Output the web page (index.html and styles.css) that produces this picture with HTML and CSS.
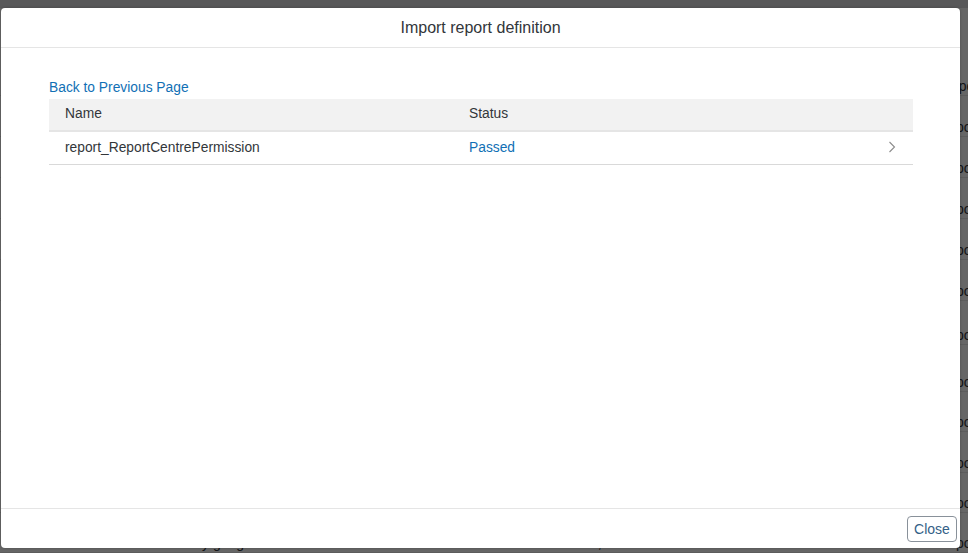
FILE: index.html
```html
<!DOCTYPE html>
<html lang="en">
<head>
<meta charset="utf-8">
<title>Import report definition</title>
<link rel="stylesheet" href="styles.css">
</head>
<body>
<div class="page">
  <div class="shell"></div>
  <div class="list">
    <div class="list-row"><span class="cell-a"></span><span class="cell-b cell-b-type">Type</span></div>
    <div class="list-row"><span class="cell-a"></span><span class="cell-b">Report</span></div>
    <div class="list-row"><span class="cell-a"></span><span class="cell-b">Report</span></div>
    <div class="list-row"><span class="cell-a"></span><span class="cell-b">Report</span></div>
    <div class="list-row"><span class="cell-a"></span><span class="cell-b">Report</span></div>
    <div class="list-row"><span class="cell-a"></span><span class="cell-b">Report</span></div>
    <div class="list-row h43"><span class="cell-a"></span><span class="cell-b">Report</span></div>
    <div class="list-row h46"><span class="cell-a"></span><span class="cell-b">Report</span></div>
    <div class="list-row h39"><span class="cell-a"></span><span class="cell-b">Report</span></div>
    <div class="list-row"><span class="cell-a"></span><span class="cell-b">Report</span></div>
    <div class="list-row h39"><span class="cell-a"></span><span class="cell-b">Report</span></div>
    <div class="list-row h39"><span class="cell-a"><span class="tail-a">Monthly gauge</span><span class="tail-b">a, b</span></span><span class="cell-b">Report</span></div>
  </div>
</div>
<div class="overlay"></div>
<div class="dialog" role="dialog">
  <header class="dlg-head">
    <h1 class="dlg-title">Import report definition</h1>
  </header>
  <section class="dlg-body">
    <a class="back-link" href="#">Back to Previous Page</a>
    <table class="tbl">
      <thead>
        <tr>
          <th class="col-name">Name</th>
          <th class="col-status">Status</th>
          <th class="col-nav"></th>
        </tr>
      </thead>
      <tbody>
        <tr>
          <td class="col-name">report_ReportCentrePermission</td>
          <td class="col-status"><span class="status-pass">Passed</span></td>
          <td class="col-nav">
            <svg class="chev" width="8" height="12" viewBox="0 0 8 12"><path d="M1.5 1 L6.5 6 L1.5 11" fill="none" stroke="#8c8c8c" stroke-width="1.1"/></svg>
          </td>
        </tr>
      </tbody>
    </table>
  </section>
  <footer class="dlg-foot">
    <button class="btn">Close</button>
  </footer>
</div>
</body>
</html>
```
FILE: styles.css
```css
html, body {
  margin: 0;
  padding: 0;
}
body {
  width: 968px;
  height: 553px;
  overflow: hidden;
  position: relative;
  font-family: "Liberation Sans", Arial, sans-serif;
  background: #ffffff;
}
.page {
  display: flex;
  flex-direction: column;
}
.shell {
  height: 8px;
  background: #dcdddf;
}
.list {
  display: flex;
  flex-direction: column;
  padding-top: 47px;
}
.list-row {
  height: 40px;
  flex: none;
  border-bottom: 1px solid #e5e5e5;
  display: flex;
  align-items: flex-end;
  font-size: 14px;
  line-height: 18px;
  color: #32363a;
}
.list-row.h39 {
  height: 39px;
}
.list-row.h43 {
  height: 43px;
}
.list-row.h46 {
  height: 46px;
}
.cell-a {
  width: 938px;
  flex: none;
  display: flex;
}
.tail-a {
  margin-left: 160px;
  width: 430px;
}
.tail-b {
  flex: none;
}
.cell-b {
  flex: none;
}
.cell-b-type {
  margin-left: 6px;
}
.overlay {
  position: absolute;
  inset: 0;
  background: rgba(0, 0, 0, 0.6);
}
.dialog {
  position: absolute;
  left: 1px;
  top: 8px;
  width: 959px;
  height: 540px;
  background: #ffffff;
  border-radius: 4px;
  box-shadow: 0 0 3px rgba(0, 0, 0, 0.25);
  display: flex;
  flex-direction: column;
  overflow: hidden;
}
.dlg-head {
  height: 39px;
  border-bottom: 1px solid #e5e5e5;
  display: flex;
  align-items: center;
  justify-content: center;
  flex: none;
}
.dlg-title {
  margin: 0;
  font-size: 16px;
  font-weight: normal;
  color: #32363a;
}
.dlg-body {
  flex: 1;
  padding: 31px 47px 0 48px;
  display: flex;
  flex-direction: column;
}
.back-link {
  font-size: 13.8px;
  line-height: 18px;
  color: #1170b5;
  text-decoration: none;
  align-self: flex-start;
  margin-bottom: 2px;
}
.tbl {
  width: 864px;
  border-collapse: collapse;
  font-size: 13.8px;
  color: #32363a;
}
.tbl th {
  height: 29px;
  padding: 0 0 2px 16px;
  background: #f2f2f2;
  border-bottom: 2px solid #e5e5e5;
  text-align: left;
  font-weight: normal;
  color: #32363a;
}
.tbl td {
  height: 30px;
  padding: 0 0 2px 16px;
  border-bottom: 1px solid #d9d9d9;
}
.tbl .col-name {
  width: 388px;
}
.tbl .col-status {
  width: 370px;
}
.tbl .col-nav {
  text-align: right;
  padding-right: 17px;
}
.chev {
  display: block;
  margin-left: auto;
}
.status-pass {
  color: #1170b5;
}
.dlg-foot {
  height: 39px;
  border-top: 1px solid #e5e5e5;
  display: flex;
  align-items: center;
  justify-content: flex-end;
  padding-right: 3px;
  flex: none;
}
.btn {
  width: 50px;
  height: 26px;
  padding: 0;
  border: 1px solid #89919a;
  border-radius: 4px;
  background: #ffffff;
  color: #346187;
  font-family: "Liberation Sans", Arial, sans-serif;
  font-size: 14px;
  margin-top: 1px;
}
```
